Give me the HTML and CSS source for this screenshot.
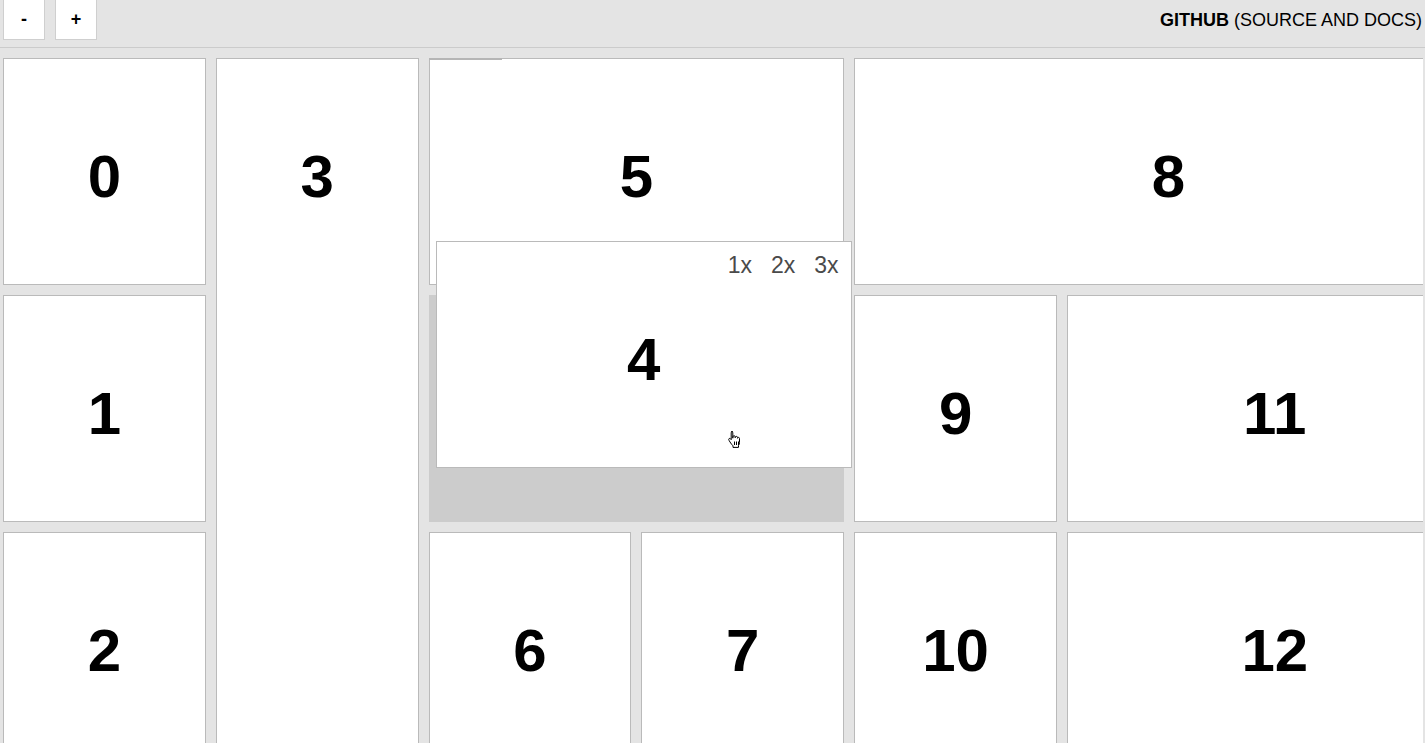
FILE: index.html
```html
<!DOCTYPE html>
<html>
<head>
<meta charset="utf-8">
<link rel="stylesheet" href="styles.css">
</head>
<body>
<div class="topbar">
  <button class="btn">-</button>
  <button class="btn">+</button>
  <div class="spacer"></div>
  <a class="gh"><b>GITHUB</b> (SOURCE AND DOCS)</a>
</div>
<div class="viewport">
  <div class="grid">
    <div class="tile c1 r1"><span class="num">0</span></div>
    <div class="tile c1 r2"><span class="num">1</span></div>
    <div class="tile c1 r3"><span class="num">2</span></div>
    <div class="tile c2 r1 tall"><span class="num">3</span></div>
    <div class="tile c3 r1 w2 accent"><span class="num">5</span></div>
    <div class="placeholder c3 r2 w2"></div>
    <div class="tile c3 r3"><span class="num">6</span></div>
    <div class="tile c4 r3"><span class="num">7</span></div>
    <div class="tile c5 r1 w3"><span class="num">8</span></div>
    <div class="tile c5 r2"><span class="num">9</span></div>
    <div class="tile c5 r3"><span class="num">10</span></div>
    <div class="tile c6 r2 w2"><span class="num">11</span></div>
    <div class="tile c6 r3 w2"><span class="num">12</span></div>
  </div>
  <div class="tile dragging">
    <div class="resize"><span>1x</span><span>2x</span><span>3x</span></div>
    <span class="num">4</span>
    <svg class="cursor" width="16" height="19" viewBox="0 0 16 19">
      <path d="M4.5 1.5c.8 0 1.3.5 1.3 1.3v5.4l.1-1.4c.1-.8.6-1.1 1.2-1.1.6 0 1.1.4 1.1 1.1v1l.2-.6c.2-.6.6-.8 1.1-.8.6 0 1 .4 1 1v.9l.2-.4c.2-.4.6-.6 1-.5.5.1.8.5.8 1.1v3.9c0 1.3-.4 2.3-1 3.1v1.9H6v-1.6c-.9-.8-2-2.2-3-3.8-.6-1-1.3-2-1.3-2.6 0-.6.4-1 1-1 .5 0 .8.3 1.1.7l.4.6V2.8c0-.8.5-1.3 1.3-1.3z" fill="#fff" stroke="#000" stroke-width="1"/>
      <path d="M7.5 11.5v3.5M9.5 11.5v3.5M11.5 11.5v3.5" stroke="#000" stroke-width="1"/>
    </svg>
  </div>
</div>
</body>
</html>
```
FILE: styles.css
```css
html, body {
  margin: 0;
  padding: 0;
  overflow: hidden;
  height: 743px;
}
body {
  background: #e4e4e4;
  font-family: "Liberation Sans", Arial, Helvetica, sans-serif;
  color: #000;
}
.topbar {
  display: flex;
  align-items: flex-start;
  height: 47px;
  border-bottom: 1px solid #cbcbcb;
  padding-left: 3px;
  padding-right: 3px;
  box-sizing: content-box;
}
.btn {
  width: 42px;
  height: 40px;
  margin: 0 10px 0 0;
  padding: 0 0 1px 0;
  background: #fff;
  border: 1px solid #cfcfcf;
  border-top: none;
  font-family: "Liberation Sans", Arial, sans-serif;
  font-weight: bold;
  font-size: 18px;
  color: #000;
}
.spacer {
  flex: 1;
}
.gh {
  font-size: 18px;
  line-height: 40px;
  color: #000;
  text-decoration: none;
  white-space: nowrap;
}
.viewport {
  position: relative;
  margin-top: 10px;
  margin-left: 3px;
  width: 1420px;
  overflow: hidden;
  height: 700px;
}
.grid {
  display: grid;
  grid-template-columns: repeat(7, 202.8px);
  grid-template-rows: repeat(3, 227px);
  gap: 10px;
}
.tile {
  position: relative;
  background: #fff;
  border: 1px solid #bababa;
  box-sizing: border-box;
  text-align: center;
}
.placeholder {
  background: #cccccc;
}
.c1 { grid-column-start: 1; }
.c2 { grid-column-start: 2; }
.c3 { grid-column-start: 3; }
.c4 { grid-column-start: 4; }
.c5 { grid-column-start: 5; }
.c6 { grid-column-start: 6; }
.r1 { grid-row-start: 1; }
.r2 { grid-row-start: 2; }
.r3 { grid-row-start: 3; }
.w2 { grid-column-end: span 2; }
.w3 { grid-column-end: span 3; }
.tall { grid-row-end: span 3; }
.num {
  display: block;
  font-weight: bold;
  font-size: 60px;
  line-height: 60px;
  padding-top: 88px;
}
.accent::before {
  content: "";
  position: absolute;
  top: -1px;
  left: -1px;
  width: 73px;
  height: 2px;
  background: #b5b5b5;
}
.dragging {
  position: absolute;
  left: 433px;
  top: 183px;
  width: 415.6px;
  height: 227px;
}
.dragging .num {
  padding-top: 49px;
}
.resize {
  display: flex;
  justify-content: flex-end;
  gap: 19px;
  padding: 10px 12px 0 0;
  height: 29px;
  font-size: 23px;
  line-height: 26px;
  color: #4a4a4a;
}
.cursor {
  position: absolute;
  left: 290px;
  top: 188px;
}
```
